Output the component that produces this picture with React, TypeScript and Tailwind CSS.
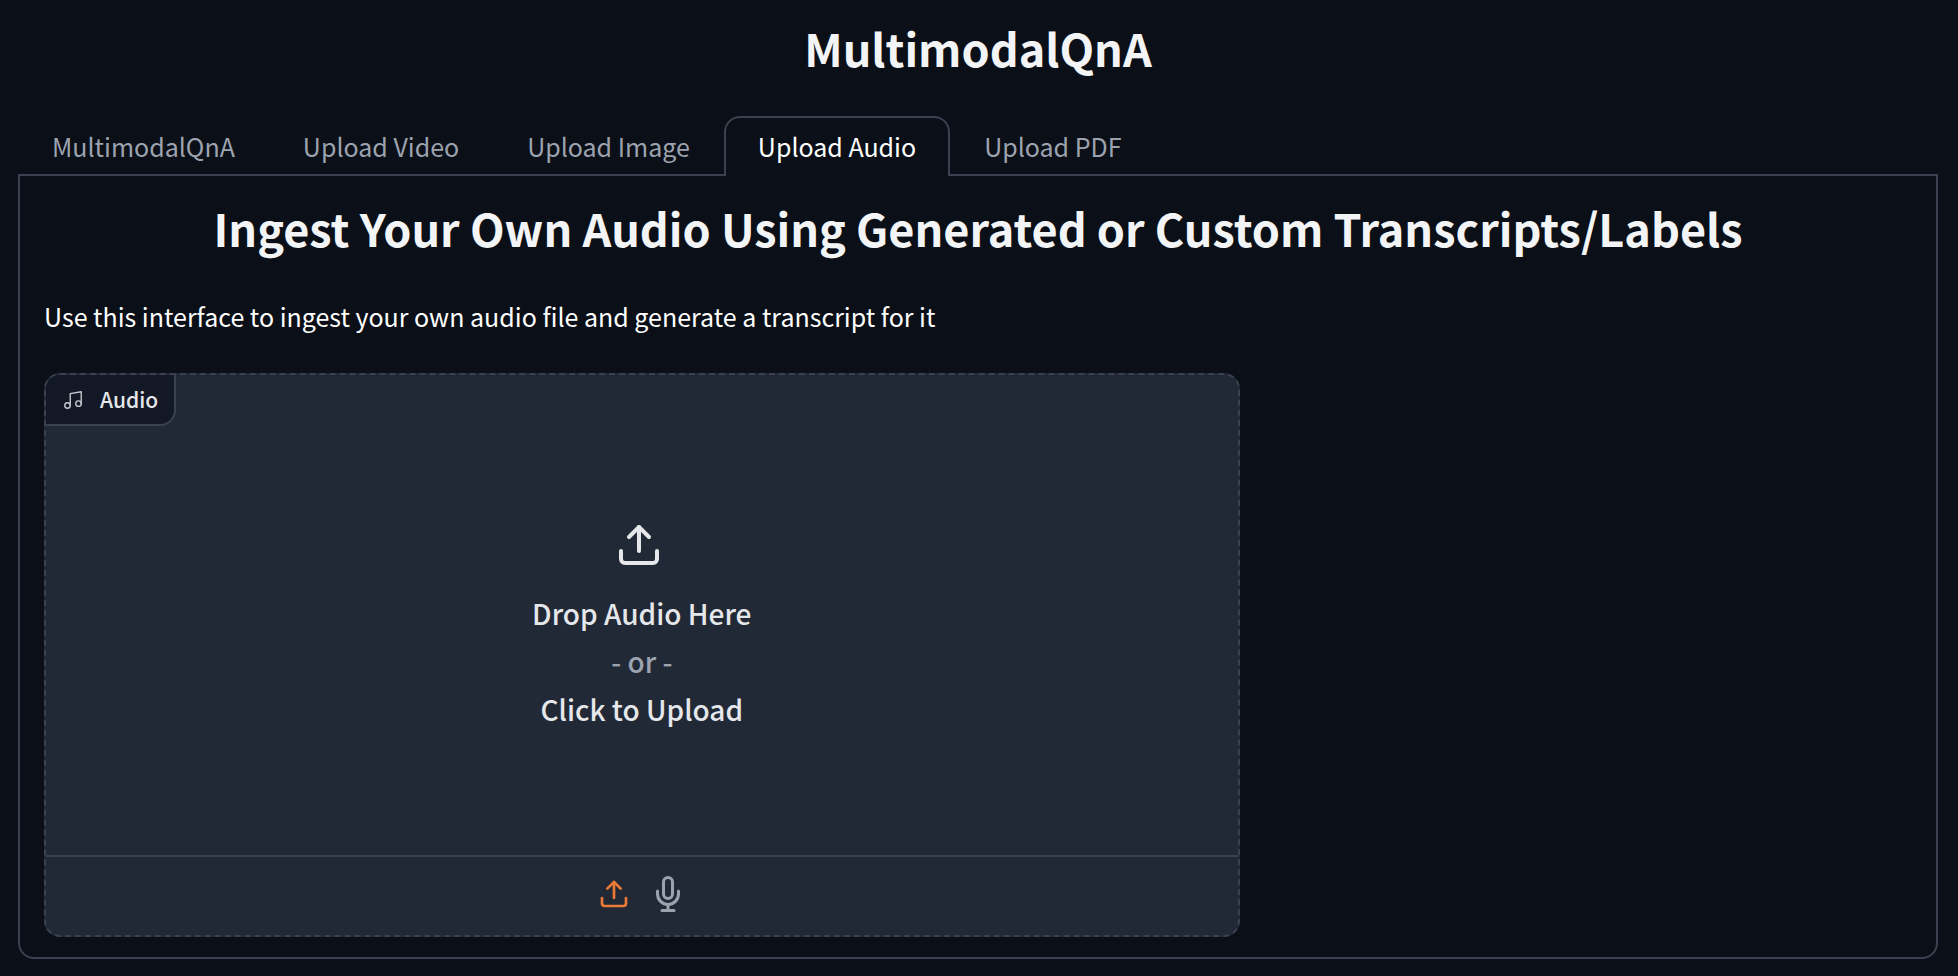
const tabs = ["MultimodalQnA", "Upload Video", "Upload Image", "Upload Audio", "Upload PDF"];
const active = "Upload Audio";

function UploadIcon({ className }: { className: string }) {
  return (
    <svg className={className} viewBox="0 0 24 24" fill="none" stroke="currentColor" strokeWidth="2" strokeLinecap="round" strokeLinejoin="round" aria-hidden="true">
      <path d="M21 15v4a2 2 0 0 1-2 2H5a2 2 0 0 1-2-2v-4" />
      <polyline points="17 8 12 3 7 8" />
      <line x1="12" y1="3" x2="12" y2="15" />
    </svg>
  );
}

function MicIcon({ className }: { className: string }) {
  return (
    <svg className={className} viewBox="0 0 24 24" fill="none" stroke="currentColor" strokeWidth="2" strokeLinecap="round" strokeLinejoin="round" aria-hidden="true">
      <path d="M12 1a3 3 0 0 0-3 3v8a3 3 0 0 0 6 0V4a3 3 0 0 0-3-3z" />
      <path d="M19 10v2a7 7 0 0 1-14 0v-2" />
      <line x1="12" y1="19" x2="12" y2="23" />
      <line x1="8" y1="23" x2="16" y2="23" />
    </svg>
  );
}

function MusicIcon({ className }: { className: string }) {
  return (
    <svg className={className} viewBox="0 0 24 24" fill="none" stroke="currentColor" strokeWidth="1.5" strokeLinecap="round" strokeLinejoin="round" aria-hidden="true">
      <path d="M9 18V5l12-2v13" />
      <circle cx="6" cy="18" r="3" />
      <circle cx="18" cy="16" r="3" />
    </svg>
  );
}

export default function App() {
  return (
    <div className="min-h-screen bg-[#0b0f17] pt-4 pr-5 pb-4 pl-[18px] font-['Noto_Sans_CJK_SC',sans-serif] text-[#f3f4f6]">
      <h1 className="text-center text-[45px] leading-[64px] font-bold">MultimodalQnA</h1>

      <nav role="tablist" className="mt-9 flex">
        {tabs.map((tab) => (
          <button
            key={tab}
            role="tab"
            aria-selected={tab === active}
            className={
              tab === active
                ? "z-10 -mb-[2px] h-[60px] rounded-t-2xl border-2 border-b-0 border-[#3a4150] bg-[#0b0f17] px-8 pb-[2px] text-[25px] leading-[56px] text-white"
                : "h-[58px] border-2 border-b-0 border-transparent px-8 text-[25px] leading-[56px] text-[#9ca3af]"
            }
          >
            {tab}
          </button>
        ))}
      </nav>

      <main className="rounded-b-2xl border-2 border-[#3a4150] px-6 pt-5 pb-5">
        <h2 className="text-center text-[45px] leading-[64px] font-bold">
          Ingest Your Own Audio Using Generated or Custom Transcripts/Labels
        </h2>
        <p className="mt-9 text-[25px] leading-[40px] text-white">
          Use this interface to ingest your own audio file and generate a transcript for it
        </p>

        <section className="relative mt-[37px] flex w-16/25 flex-col rounded-2xl border-2 border-dashed border-[#3a4150] bg-[#222936] font-medium">
          <div className="absolute top-0 left-0 flex h-[51px] items-center gap-4 rounded-tl-[14px] rounded-br-2xl border-r-2 border-b-2 border-[#3a4150] bg-[#121826] px-4 text-[21px] text-[#e5e7eb]">
            <MusicIcon className="size-[22px] text-[#c4c8cf]" />
            Audio
          </div>
          <button className="flex h-[480px] flex-col items-center justify-center pt-6 text-[28px] leading-[48px] text-[#e5e7eb]">
            <UploadIcon className="mr-1.5 mb-5 size-12" />
            <span>Drop Audio Here</span>
            <span className="text-[#9ca3af]">- or -</span>
            <span>Click to Upload</span>
          </button>
          <div className="flex h-20 items-center justify-center gap-5 border-t-2 border-[#3a4150] pb-1">
            <button aria-label="Upload file" className="text-[#ea7a35]">
              <UploadIcon className="size-8" />
            </button>
            <button aria-label="Record audio" className="text-[#9ca3af]">
              <MicIcon className="size-9 overflow-visible" />
            </button>
          </div>
        </section>
      </main>
    </div>
  );
}
